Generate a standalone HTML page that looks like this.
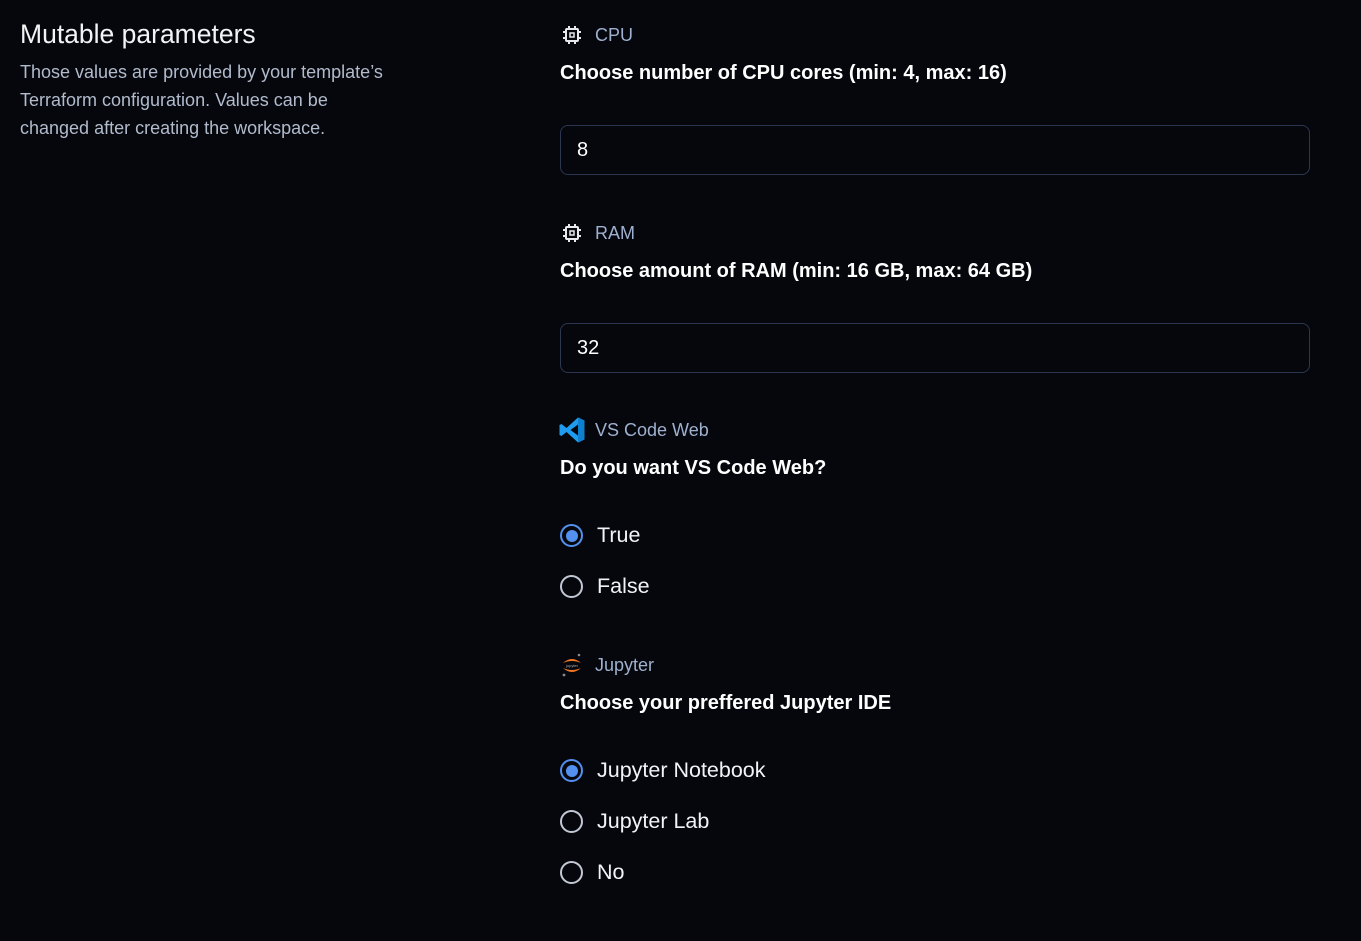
<!DOCTYPE html><html><head><style>
body{margin:0;background:#05070c;width:1361px;height:941px;overflow:hidden;font-family:"Liberation Sans",sans-serif;color:#fff;position:relative}
.a{position:absolute;white-space:nowrap}
.t{left:20px;top:19px;font-size:26.5px;color:#f1f3f6}
.d{left:20px;top:58px;font-size:18px;line-height:28px;color:#b1bbcc;white-space:normal;width:372px}
.lab{font-size:18px;color:#9fb0d0;left:595px}
.q{font-size:20px;font-weight:bold;left:560px;color:#fff}
.in{left:560px;border:1px solid #2c3650;border-radius:8px;box-sizing:border-box;width:750px;height:50px;padding-left:16px;line-height:48px;font-size:20px}
.r{left:560px;width:23px;height:23px;box-sizing:border-box;border:2px solid #c2c8d4;border-radius:50%}
.r.on{border-color:#5390f0}
.r.on::after{content:"";position:absolute;left:3.5px;top:3.5px;width:12px;height:12px;border-radius:50%;background:#5390f0}
.rl{left:597px;font-size:21.5px;color:#f1f3f6}
</style></head><body>
<div class="a t">Mutable parameters</div>
<div class="a d">Those values are provided by your template’s Terraform configuration. Values can be changed after creating the workspace.</div>

<svg class="a" style="left:562px;top:25px" width="20" height="20" viewBox="0 0 20 20" fill="none" stroke="#e6e9ef" stroke-width="2"><rect x="4" y="4" width="12" height="12" rx="1"/><rect x="8" y="8" width="4" height="4" stroke-width="1.5"/><path d="M7 1v3M13 1v3M7 16v3M13 16v3M1 7h3M1 13h3M16 7h3M16 13h3"/></svg>
<div class="a lab" style="top:25px">CPU</div>
<div class="a q" style="top:62px">Choose number of CPU cores (min: 4, max: 16)</div>
<div class="a in" style="top:125px">8</div>

<svg class="a" style="left:562px;top:223px" width="20" height="20" viewBox="0 0 20 20" fill="none" stroke="#e6e9ef" stroke-width="2"><rect x="4" y="4" width="12" height="12" rx="1"/><rect x="8" y="8" width="4" height="4" stroke-width="1.5"/><path d="M7 1v3M13 1v3M7 16v3M13 16v3M1 7h3M1 13h3M16 7h3M16 13h3"/></svg>
<div class="a lab" style="top:223px">RAM</div>
<div class="a q" style="top:260px">Choose amount of RAM (min: 16 GB, max: 64 GB)</div>
<div class="a in" style="top:323px">32</div>

<svg class="a" style="left:559px;top:417px" width="26" height="26" viewBox="0 0 26 26"><path d="M19 0.5L25.5 3.5V22.5L19 25.5L7.5 15L2.5 19L0.5 18V8L2.5 7L7.5 11L19 0.5ZM19 7.5L11.5 13L19 18.5Z" fill="#1f9cf0"/><path d="M19 0.5L25.5 3.5V22.5L19 25.5Z" fill="#0f7fd0"/></svg>
<div class="a lab" style="top:420px">VS Code Web</div>
<div class="a q" style="top:457px">Do you want VS Code Web?</div>
<div class="a r on" style="top:524px"></div><div class="a rl" style="top:523px">True</div>
<div class="a r" style="top:575px"></div><div class="a rl" style="top:574px">False</div>

<svg class="a" style="left:561px;top:652px" width="22" height="26" viewBox="0 0 22 26"><path d="M2 11Q11 3 20 11Q11 7 2 11Z" fill="#f37726"/><path d="M2 16Q11 24 20 16Q11 20 2 16Z" fill="#f37726"/><text x="11" y="15" font-size="4" fill="#aaa" text-anchor="middle" font-family="Liberation Sans">jupyter</text><circle cx="18" cy="3" r="1.3" fill="#888"/><circle cx="3" cy="23" r="1.4" fill="#888"/></svg>
<div class="a lab" style="top:655px">Jupyter</div>
<div class="a q" style="top:692px">Choose your preffered Jupyter IDE</div>
<div class="a r on" style="top:759px"></div><div class="a rl" style="top:758px">Jupyter Notebook</div>
<div class="a r" style="top:810px"></div><div class="a rl" style="top:809px">Jupyter Lab</div>
<div class="a r" style="top:861px"></div><div class="a rl" style="top:860px">No</div>
</body></html>
